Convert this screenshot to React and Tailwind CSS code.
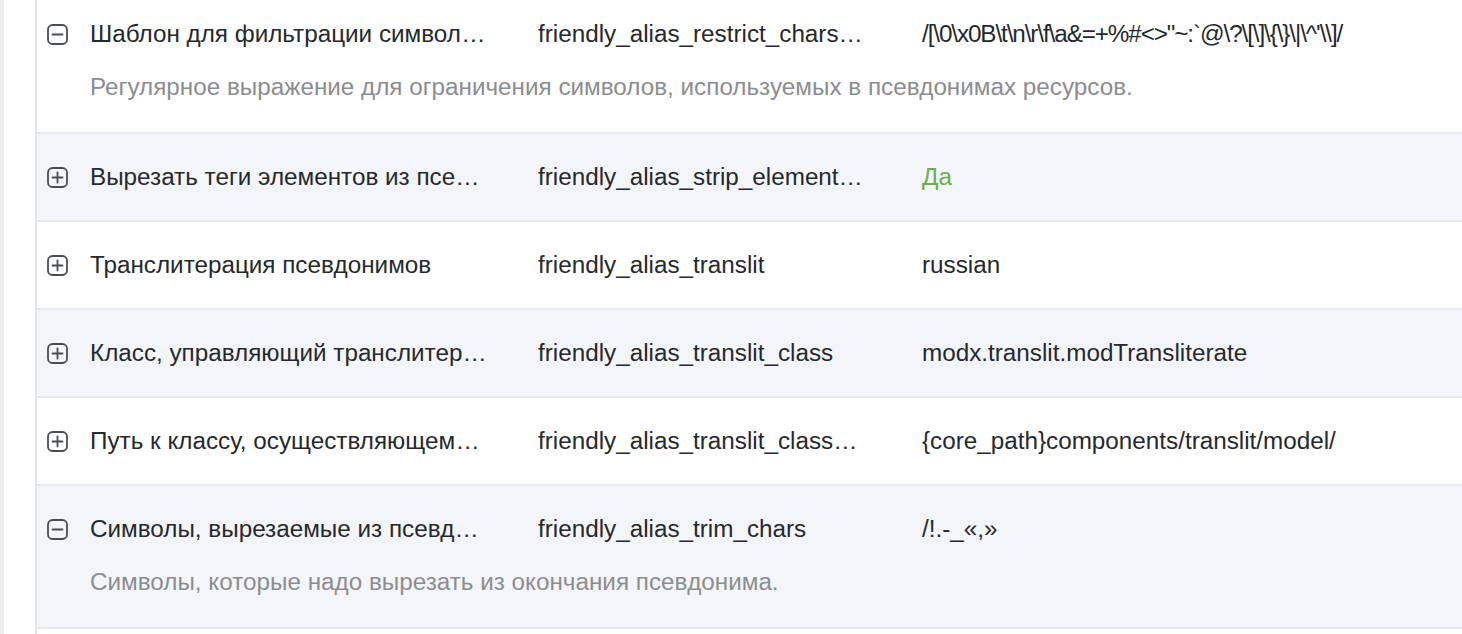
const rows = [
  {
    title: 'Шаблон для фильтрации символов в псевдонимах',
    key: 'friendly_alias_restrict_chars_pattern',
    value: '/[\\0\\x0B\\t\\n\\r\\f\\a&=+%#<>"~:`@\\?\\[\\]\\{\\}\\|\\^\'\\\\]/',
    tight: true,
    description: 'Регулярное выражение для ограничения символов, используемых в псевдонимах ресурсов.',
    expanded: true,
  },
  {
    title: 'Вырезать теги элементов из псевдонимов',
    key: 'friendly_alias_strip_element_tags',
    value: 'Да',
    yes: true,
  },
  {
    title: 'Транслитерация псевдонимов',
    key: 'friendly_alias_translit',
    value: 'russian',
  },
  {
    title: 'Класс, управляющий транслитерацией',
    key: 'friendly_alias_translit_class',
    value: 'modx.translit.modTransliterate',
  },
  {
    title: 'Путь к классу, осуществляющему транслитерацию',
    key: 'friendly_alias_translit_class_path',
    value: '{core_path}components/translit/model/',
  },
  {
    title: 'Символы, вырезаемые из псевдонима',
    key: 'friendly_alias_trim_chars',
    value: '/!.-_«,»',
    description: 'Символы, которые надо вырезать из окончания псевдонима.',
    expanded: true,
  },
];

function ToggleIcon({ expanded }) {
  return (
    <svg width="21" height="21" viewBox="0 0 21 21" fill="none" stroke="#4a4d52" strokeWidth="1.8" strokeLinecap="round">
      <rect x="1" y="1" width="19" height="19" rx="4.5" />
      <line x1="5.5" y1="10.5" x2="15.5" y2="10.5" />
      {!expanded && <line x1="10.5" y1="5.5" x2="10.5" y2="15.5" />}
    </svg>
  );
}

export default function App() {
  return (
    <div className="flex h-[634px] overflow-hidden bg-white text-[#25292d] text-[24.25px] leading-[26px]" style={{ fontFamily: '"Liberation Sans", Arial, sans-serif' }}>
      <div className="w-[37px] shrink-0 bg-white border-l-[4px] border-l-[#ececec] border-r-2 border-r-[#e4e5e8]" />
      <div className="flex-1 mt-[-9px]">
        {rows.map((r, i) => (
          <div
            key={r.key}
            className={`border-b-2 border-[#e6e7ea] pt-[30px] ${r.expanded ? 'pb-[32px]' : 'pb-[30px]'} ${i % 2 === 1 ? 'bg-[#f4f5f8]' : 'bg-white'}`}
          >
            <div className="flex items-center">
              <div className="w-[53px] shrink-0 pl-[10px] flex items-center">
                <ToggleIcon expanded={r.expanded} />
              </div>
              <div className="w-[448px] shrink-0 pr-[49px] truncate">{r.title}</div>
              <div className="w-[384px] shrink-0 pr-[58px] truncate">{r.key}</div>
              <div className={`flex-1 whitespace-nowrap ${r.yes ? 'text-[#6aaf4c]' : ''} ${r.tight ? 'tracking-[-1.1px]' : ''}`}>{r.value}</div>
            </div>
            {r.description && (
              <div className="pl-[53px] mt-[27px] text-[#8c8d90]">{r.description}</div>
            )}
          </div>
        ))}
      </div>
    </div>
  );
}
